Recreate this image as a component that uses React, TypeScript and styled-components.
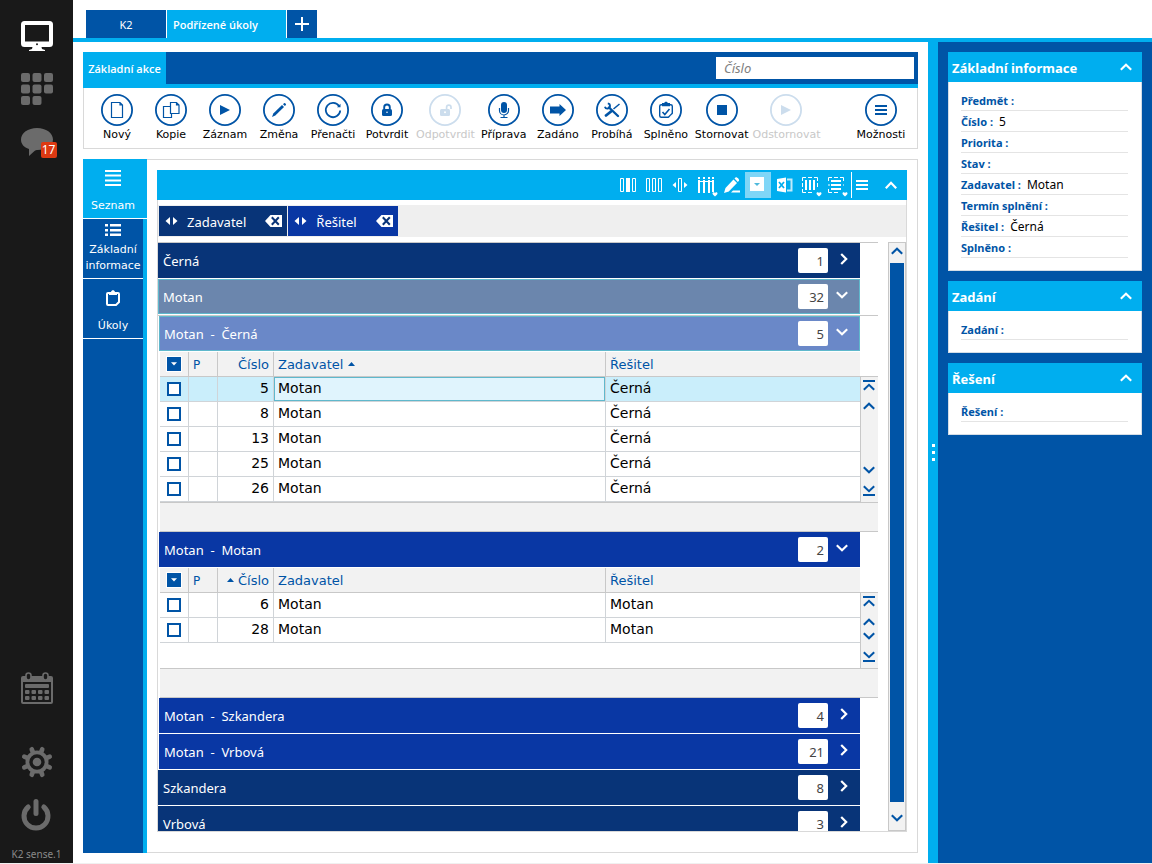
import React from "react";
import styled, { createGlobalStyle, css } from "styled-components";

const cyan = "#00aeef";
const blue = "#0054a6";
const navy = "#083478";
const royal = "#0937a4";
const line = "#d9d9d9";
const gridLine = "#c8c8c8";
const uiFont = '"Noto Sans", "Open Sans", sans-serif';
const wideFont = '"DejaVu Sans", Verdana, sans-serif';

const GlobalStyle = createGlobalStyle`
  *, *::before, *::after { box-sizing: border-box; }
  body { margin: 0; background: #fff; font-family: ${uiFont}; font-size: 13px; color: #000; }
  button { font: inherit; color: inherit; background: none; border: 0; padding: 0; margin: 0; cursor: pointer; }
  svg { display: block; flex: none; }
`;

/* ---------- shell ---------- */

const Page = styled.div`
  display: flex;
  height: 100vh;
  overflow: hidden;
  border-bottom: 1px solid #f0f0f0;
`;

const Dock = styled.nav`
  flex: none;
  width: 73px;
  display: flex;
  flex-direction: column;
  align-items: center;
  gap: 21px;
  padding: 20px 0 2px;
  background: #191919;
  color: #6b6b6b;
`;

const DockButton = styled.button<{ $active?: boolean }>`
  position: relative;
  width: 32px;
  height: 32px;
  color: ${(p) => (p.$active ? "#fff" : "inherit")};
`;

const DockSpacer = styled.div`
  flex: 1;
`;

const DockBreak = styled.div`
  height: 0;
`;

const DockFoot = styled.div`
  display: flex;
  flex-direction: column;
  align-items: center;
  gap: 16px;
`;

const Badge = styled.span`
  position: absolute;
  left: 20px;
  top: 16px;
  width: 16px;
  height: 16px;
  border-radius: 2px;
  background: #dc3912;
  color: #fff;
  font-size: 12px;
  line-height: 16px;
  text-align: center;
`;

const Version = styled.div`
  font-size: 10px;
  line-height: 14px;
  color: #8a8a8a;
`;

const Workspace = styled.div`
  flex: 1;
  min-width: 0;
  display: flex;
  flex-direction: column;
`;

const TabBar = styled.div`
  flex: none;
  display: flex;
  gap: 1px;
  padding: 10px 13px 0;
  border-bottom: 4px solid ${cyan};
`;

const PageTab = styled.button<{ $active?: boolean }>`
  display: flex;
  align-items: center;
  justify-content: center;
  height: 28px;
  width: 80px;
  background: ${blue};
  color: #fff;
  font-size: 11px;
  ${(p) =>
    p.$active &&
    css`
      width: 119px;
      justify-content: flex-start;
      padding-left: 6px;
      background: ${cyan};
      font-family: "Open Sans", "Noto Sans", sans-serif;
      font-weight: 600;
    `}
`;

const AddTab = styled(PageTab)`
  width: 30px;
`;

const Split = styled.div`
  flex: 1;
  min-height: 0;
  display: flex;
`;

const Main = styled.main`
  flex: 1;
  min-width: 0;
  display: flex;
  flex-direction: column;
  gap: 10px;
  padding: 10px;
`;

const Splitter = styled.div`
  flex: none;
  width: 10px;
  background: ${cyan};
  display: flex;
  flex-direction: column;
  align-items: center;
  justify-content: center;
  gap: 4px;
`;

const Dot = styled.i`
  width: 3px;
  height: 3px;
  background: #fff;
`;

/* ---------- ribbon ---------- */

const Ribbon = styled.section`
  flex: none;
`;

const RibbonHead = styled.div`
  display: flex;
  justify-content: space-between;
  height: 36px;
  background: ${blue};
  border-bottom: 4px solid ${cyan};
`;

const RibbonTab = styled.button`
  width: 83px;
  background: ${cyan};
  color: #fff;
  font-family: "Open Sans", "Noto Sans", sans-serif;
  font-size: 11px;
  font-weight: 600;
`;

const Search = styled.input`
  width: 198px;
  height: 22px;
  margin: 5px 4px 0 0;
  padding: 0 8px;
  border: 0;
  border-radius: 0;
  background: #fff;
  font: italic 13px ${uiFont};
  &::placeholder { color: #808080; opacity: 1; }
`;

const RibbonBody = styled.div`
  display: flex;
  height: 61px;
  padding: 6px 9px 0 6px;
  border: 1px solid ${line};
  border-top: 0;
`;

const Action = styled.button`
  display: flex;
  flex-direction: column;
  align-items: center;
  gap: 2px;
  height: 48px;
  min-width: 54px;
  padding: 0 2px;
  font-family: ${wideFont};
  font-size: 11px;
  line-height: 13px;
  svg { color: ${blue}; }
  &:disabled { color: #c8c8c8; }
  &:disabled svg { color: #ccdded; }
`;

const Grow = styled.div`
  flex: 1;
`;

/* ---------- body ---------- */

const Body = styled.div`
  flex: 1;
  min-height: 0;
  display: flex;
`;

const SideTabs = styled.div`
  flex: none;
  width: 64px;
  background: linear-gradient(to right, ${blue} 60px, ${cyan} 60px);
`;

const SideTab = styled.button<{ $active?: boolean }>`
  display: flex;
  flex-direction: column;
  align-items: center;
  justify-content: space-between;
  width: ${(p) => (p.$active ? "64px" : "60px")};
  height: 60px;
  padding: ${(p) => (p.$active ? "5px 4px 4px 0" : "5px 0 4px")};
  background: ${(p) => (p.$active ? cyan : blue)};
  border-bottom: 1px solid #fff;
  color: #fff;
  font-family: ${wideFont};
  font-size: 11px;
  line-height: 16px;
`;

const SideIcon = styled.span<{ $tight?: boolean }>`
  flex: 1;
  display: flex;
  align-items: ${(p) => (p.$tight ? "flex-start" : "center")};
  padding-bottom: ${(p) => (p.$tight ? "0" : "6px")};
`;

const Frame = styled.section`
  flex: 1;
  min-width: 0;
  display: flex;
  flex-direction: column;
  padding: 10px 10px 20px;
  border: 1px solid ${line};
  border-left: 0;
`;

const GridPanel = styled.div`
  flex: 1;
  min-height: 0;
  display: flex;
  flex-direction: column;
`;

const GridToolbar = styled.div`
  flex: none;
  display: flex;
  align-items: center;
  justify-content: flex-end;
  height: 30px;
  padding-right: 3px;
  background: ${cyan};
  color: #fff;
`;

const Tool = styled.button<{ $pressed?: boolean }>`
  width: 26px;
  height: 26px;
  background: ${(p) => (p.$pressed ? "#7fd6f7" : "none")};
`;

const ToolDivider = styled.div`
  width: 1px;
  height: 26px;
  margin-left: 2px;
  background: #fff;
`;

const GridBody = styled.div`
  flex: 1;
  min-height: 0;
  display: flex;
  flex-direction: column;
  gap: 5px;
  padding-top: 5px;
  border: 1px solid ${line};
  border-top: 0;
`;

const GroupBar = styled.div`
  flex: none;
  display: flex;
  gap: 1px;
  padding: 1px;
  height: 32px;
  background: #efefef;
`;

const Chip = styled.div<{ $color: string }>`
  display: flex;
  align-items: center;
  height: 30px;
  padding: 0 5px 0 6px;
  background: ${(p) => p.$color};
  color: #fff;
`;

const ChipLabel = styled.span`
  padding: 2px 19px 0 9px;
`;

const ListArea = styled.div`
  flex: 1;
  min-height: 0;
  display: flex;
  gap: 10px;
`;

const List = styled.div`
  flex: 1;
  min-width: 0;
  overflow: hidden;
  border-top: 1px solid ${gridLine};
`;

const SubList = styled.div`
  border-top: 1px solid ${gridLine};
`;

type Tone = "navy" | "steel" | "royal" | "sky";

const tones: Record<Tone, string> = {
  navy,
  steel: "#6b86ad",
  royal,
  sky: "#6a88c8",
};

const GroupRow = styled.div<{ $tone: Tone; $nested?: boolean }>`
  display: flex;
  align-items: center;
  height: 35px;
  margin: 0 18px 1px ${(p) => (p.$nested ? "1px" : "0")};
  padding-left: 5px;
  background: ${(p) => tones[p.$tone]};
  color: #fff;
  ${(p) =>
    (p.$tone === "steel" || p.$tone === "sky") &&
    css`
      padding-left: 4px;
      border: 1px solid #5fb8cc;
    `}
`;

const GroupName = styled.span`
  flex: 1;
  padding-top: 1px;
  white-space: pre;
`;

const Count = styled.span`
  width: 30px;
  height: 25px;
  padding-right: 4px;
  border-radius: 2px;
  background: #fff;
  color: #444;
  line-height: 27px;
  text-align: right;
`;

const Toggle = styled.button<{ $edge?: boolean }>`
  display: flex;
  width: ${(p) => (p.$edge ? "31px" : "32px")};
  padding: 0 0 4px;
  &[aria-expanded="true"] { padding-left: 8px; }
  &[aria-expanded="false"] { padding-left: 12px; }
`;

/* ---------- nested tables ---------- */

const Nested = styled.div`
  margin-left: 2px;
`;

const NestedTop = styled.div`
  display: flex;
  border-bottom: 1px solid ${gridLine};
`;

const TableBox = styled.div`
  flex: 1;
  min-width: 0;
`;

const Table = styled.table`
  width: 100%;
  table-layout: fixed;
  border-collapse: separate;
  border-spacing: 0;
  font-family: ${wideFont};
`;

const Col = styled.col<{ $w?: number }>`
  width: ${(p) => (p.$w ? `${p.$w}px` : "auto")};
`;

const Th = styled.th<{ $right?: boolean }>`
  height: 25px;
  padding: 2px 4px 0;
  background: #f2f2f2;
  border-right: 1px solid ${gridLine};
  border-bottom: 1px solid ${gridLine};
  color: ${blue};
  font-size: 13px;
  line-height: 20px;
  font-weight: 400;
  text-align: ${(p) => (p.$right ? "right" : "left")};
  &:last-child { border-right: 0; }
  svg { display: inline-block; vertical-align: 3px; }
`;

const SmallHead = styled.span`
  font-size: 12px;
`;

const Td = styled.td<{ $right?: boolean; $focus?: boolean }>`
  height: 25px;
  padding: 0 4px 2px;
  border-right: 1px solid #d0d4d8;
  border-bottom: 1px solid #d0d4d8;
  font-size: 14px;
  line-height: 20px;
  text-align: ${(p) => (p.$right ? "right" : "left")};
  &:last-child { border-right: 0; }
  ${(p) =>
    p.$focus &&
    css`
      background: #e0f4fd;
      box-shadow: inset 0 0 0 1px #5fb8cc;
    `}
`;

const Tr = styled.tr<{ $selected?: boolean }>`
  background: ${(p) => (p.$selected ? "#caeefb" : "#fff")};
`;

const CheckTh = styled(Th)`
  padding: 0 7px;
`;

const CheckTd = styled(Td)`
  padding: 0 7px;
`;

const Check = styled.input`
  appearance: none;
  display: block;
  width: 14px;
  height: 14px;
  margin: 0;
  border: 2px solid ${blue};
  border-radius: 0;
  background: #fff;
`;

const SelectMenu = styled.button`
  display: flex;
  align-items: center;
  justify-content: center;
  width: 14px;
  height: 14px;
  background: ${blue};
  outline: 1px solid #fff;
  color: #fff;
`;

const EmptySpace = styled.div`
  height: 25px;
`;

const Pager = styled.div`
  flex: none;
  width: 18px;
  display: flex;
  flex-direction: column;
  justify-content: space-between;
  align-items: center;
  margin-top: 24px;
  padding: 3px 1px 6px 0;
  background: #f2f2f2;
  border-top: 1px solid ${gridLine};
  border-left: 1px solid ${gridLine};
  color: ${blue};
`;

const PagerPair = styled.div`
  display: flex;
  flex-direction: column;
  gap: 11px;
`;

const Footer = styled.div`
  height: 29px;
  background: #f2f2f2;
  border-bottom: 1px solid ${gridLine};
`;

const ScrollTrack = styled.div`
  flex: none;
  width: 18px;
  display: flex;
  flex-direction: column;
  align-items: center;
  background: #f2f2f2;
  border: 1px solid ${gridLine};
  color: ${blue};
`;

const ScrollArrow = styled.button<{ $tall?: boolean }>`
  display: flex;
  justify-content: center;
  padding-top: ${(p) => (p.$tall ? "12px" : "4px")};
  width: 16px;
  height: ${(p) => (p.$tall ? "28px" : "20px")};
`;

const Thumb = styled.div`
  flex: 1;
  width: 14px;
  background: ${blue};
`;

/* ---------- preview panel ---------- */

const Preview = styled.aside`
  flex: none;
  width: 214px;
  display: flex;
  flex-direction: column;
  gap: 10px;
  padding: 10px;
  background: ${blue};
`;

const CardHead = styled.button`
  display: flex;
  align-items: center;
  justify-content: space-between;
  width: 100%;
  height: 30px;
  padding: 2px 10px 0 4px;
  background: ${cyan};
  color: #fff;
  font-weight: 700;
  svg { margin-bottom: 2px; }
`;

const CardBody = styled.dl`
  margin: 0;
  padding: 8px 13px 12px 12px;
  background: #fff;
  border: 1px solid #d4dde6;
  border-top: 0;
`;

const Field = styled.div`
  display: flex;
  align-items: center;
  gap: 6px;
  height: 21px;
  border-bottom: 1px solid #e4e4e4;
  dt {
    color: ${blue};
    font-size: 11px;
    font-weight: 700;
    white-space: pre;
  }
  dd { margin: 0; font-size: 12px; }
`;

/* ---------- icons ---------- */

const Chevron = ({ dir, w = 12 }: { dir: "up" | "down" | "right"; w?: number }) => {
  if (dir === "right")
    return (
      <svg width="8" height="12" viewBox="0 0 8 12" fill="none" stroke="currentColor" strokeWidth="2.2">
        <path d="M1.2 1l5 5-5 5" />
      </svg>
    );
  return (
    <svg width={w} height="8" viewBox="0 0 12 8" fill="none" stroke="currentColor" strokeWidth="2.1">
      <path d={dir === "up" ? "M.8 6.8L6 1.8l5.200 5" : "M.8 1.200L6 6.200l5.200-5"} />
    </svg>
  );
};

const EdgeChevron = ({ dir }: { dir: "up" | "down" }) => (
  <svg width="12" height="11" viewBox="0 0 12 11" fill="none" stroke="currentColor" strokeWidth="2">
    {dir === "up" ? <path d="M0 1h12M.8 9.800L6 4.800l5.200 5" /> : <path d="M0 10h12M.8 1.200L6 6.200l5.200-5" />}
  </svg>
);

const Triangle = ({ dir, w = 7 }: { dir: "up" | "down"; w?: number }) => (
  <svg width={w} height="4" viewBox="0 0 7 4" fill="currentColor">
    <path d={dir === "up" ? "M0 4L3.500 0 7 4z" : "M0 0h7L3.500 3.800z"} />
  </svg>
);

const ChipArrows = () => (
  <svg width="13" height="8" viewBox="0 0 13 8" fill="currentColor">
    <path d="M5 0v8L.5 4zM8 0v8l4.500-4z" />
  </svg>
);

const ChipRemove = () => (
  <svg width="17" height="12" viewBox="0 0 17 12">
    <path d="M5.500 0H17v12H5.500L0 6z" fill="#fff" />
    <path d="M6.800 2.200l7 7.600M13.800 2.200l-7 7.600" stroke={navy} strokeWidth="2" />
  </svg>
);

const actionGlyphs: Record<string, React.ReactNode> = {
  novy: <path d="M10.500 8.500h8.500l2.500 2.500v12.500h-11zM19 8.500v2.500h2.500" fill="none" stroke="currentColor" strokeWidth="1.200" />,
  kopie: (
    <g fill="none" stroke="currentColor" strokeWidth="1.200">
      <path d="M15.500 12.500h-7v11h8v-3.500" />
      <path d="M15.500 8.500h6l2.500 2.500v8.500h-8.500zM21.500 8.500v2.500h2.500" />
    </g>
  ),
  play: <path d="M11 11l10 5-10 5z" fill="currentColor" />,
  edit: (
    <g fill="currentColor">
      <path d="M9 23l1.300-3.600 8.700-8.300 2 2-8.700 8.300z" />
      <path d="M20 10.200l1-1c.8-.7 2.600 1 1.900 1.800l-1 1z" />
    </g>
  ),
  reload: (
    <g>
      <path d="M22 12A7.200 7.200 0 1 0 23.200 16.500" fill="none" stroke="currentColor" strokeWidth="1.800" />
      <path d="M20 13.200h3.500V9.700z" fill="currentColor" />
    </g>
  ),
  lock: (
    <g>
      <rect x="11" y="15" width="10" height="7" rx="1.500" fill="currentColor" />
      <path d="M13.200 15.500v-2.200a2.800 2.800 0 0 1 5.600 0v2.200" fill="none" stroke="currentColor" strokeWidth="1.900" />
      <circle cx="16" cy="18.200" r="0.800" fill="#fff" />
    </g>
  ),
  unlock: (
    <g>
      <rect x="11" y="15" width="10" height="7" rx="1.500" fill="currentColor" />
      <path d="M17.600 15.500v-2.200a2.200 2.200 0 0 1 4.400 0v1.700" fill="none" stroke="currentColor" strokeWidth="1.700" />
      <circle cx="16" cy="18.200" r="1" fill="#fff" />
    </g>
  ),
  mic: (
    <g>
      <rect x="13" y="8" width="6" height="11" rx="3" fill="currentColor" />
      <path d="M11.500 14v2.500a4.500 4.500 0 0 0 9 0V14M16 21v2.500M12.500 23.500h7" fill="none" stroke="currentColor" strokeWidth="1.200" />
    </g>
  ),
  arrow: <path d="M8 12.500h9.500V10l6.500 6-6.500 6v-2.500H8z" fill="currentColor" />,
  tools: (
    <g fill="none" stroke="currentColor">
      <path d="M13 13.500l9 8.500" strokeWidth="2.400" strokeLinecap="round" />
      <path d="M11.800 9.400a2.600 2.600 0 1 1-2.900 3.300" strokeWidth="1.900" />
      <path d="M23.500 10l-6 5" strokeWidth="1.500" />
      <path d="M15 17.500l-5 4" strokeWidth="2.800" strokeLinecap="round" />
    </g>
  ),
  done: (
    <g>
      <rect x="9.700" y="10.700" width="12.600" height="12.600" rx="1.500" fill="none" stroke="currentColor" strokeWidth="1.400" />
      <path d="M12 9h2.200c.5-1.600 3.100-1.600 3.600 0H20v3.200h-8z" fill="currentColor" />
      <path d="M12.500 18l2.300 2.500 4.700-5.500" fill="none" stroke="currentColor" strokeWidth="1.600" />
      <path d="M18.500 24l4.500-4.500V24z" fill="#fff" />
      <path d="M18.500 23l3.500-3.500" stroke="currentColor" strokeWidth="1.100" />
    </g>
  ),
  stop: <rect x="11" y="11" width="10" height="10" fill="currentColor" />,
  menu: <path d="M10 11h12v2H10zM10 15h12v2H10zM10 19h12v2H10z" fill="currentColor" />,
};

const ActionIcon = ({ name }: { name: string }) => (
  <svg width="32" height="32" viewBox="0 0 32 32">
    <circle cx="16" cy="16" r="15.100" fill="none" stroke="currentColor" strokeWidth="1.800" />
    {actionGlyphs[name]}
  </svg>
);

const toolGlyphs: Record<string, React.ReactNode> = {
  columnFill: (
    <g>
      <path d="M5.500 6.500h3v13h-3zM17.500 6.500h3v13h-3z" fill="none" stroke="currentColor" />
      <rect x="11" y="6" width="4" height="14" fill="currentColor" />
    </g>
  ),
  columns: (
    <path d="M5.500 6.500h3v13h-3zM11.500 6.500h3v13h-3zM17.500 6.500h3v13h-3z" fill="none" stroke="currentColor" />
  ),
  fit: (
    <g>
      <path d="M11.500 6.500h3v13h-3z" fill="none" stroke="currentColor" />
      <path d="M9 10v6l-3.500-3zM17 10v6l3.500-3z" fill="currentColor" />
    </g>
  ),
  columnSetup: (
    <g fill="currentColor">
      <path d="M5 5h2v2H5zM10 5h2v2h-2zM15 5h2v2h-2zM19 5h2v2h-2z" />
      <path d="M5 8h2v13H5zM10 8h2v13h-2zM15 8h2v13h-2zM19 8h2v12h-2z" />
      <path d="M5 9h16v1H5z" />
      <path d="M19.500 21.500c0-1.500 2-1.500 2.500-.5.500-1 2.500-1 2.500.5 0 1-1.500 2-2.500 3-1-1-2.500-2-2.500-3z" />
    </g>
  ),
  pencil: (
    <g fill="currentColor">
      <path d="M5 21l1.500-5 8-8.500 3.500 3.500-8.200 8.500z" />
      <path d="M15.500 6.500l1-1c1.200-1 4.300 2 3.500 3.300l-1.200 1.200zM14 18.500h7v2h-9z" />
    </g>
  ),
  dropdown: (
    <g>
      <rect x="5" y="5" width="14" height="14" fill="#fff" />
      <path d="M9 11h6l-3 3z" fill="#4fb9dc" />
    </g>
  ),
  excel: (
    <g>
      <path d="M6 7l9-1.500v15L6 19z" fill="#fff" />
      <path d="M16 7.500h4.500v11H16" fill="none" stroke="#bfeafa" strokeWidth="2" />
      <path d="M8 10l5 6M13 10l-5 6" stroke={cyan} strokeWidth="1.700" />
    </g>
  ),
  frameColumns: (
    <g>
      <path d="M9 5.500H5.500V9M17 5.500h3.500V9M5.500 17v3.500H9M11 5.500h4M5.500 11v4M20.500 11v4M11 20.500h4" fill="none" stroke="currentColor" />
      <path d="M8 8h2v10H8zM12 8h2v10h-2zM16 8h2v10h-2z" fill="currentColor" />
      <path d="M19.500 21.500c0-1.500 2-1.500 2.500-.5.500-1 2.500-1 2.500.5 0 1-1.500 2-2.500 3-1-1-2.500-2-2.500-3z" fill="currentColor" />
    </g>
  ),
  frameRows: (
    <g>
      <path d="M9 5.500H5.500V9M17 5.500h3.500V9M5.500 17v3.500H9M11 5.500h4M11 20.500h4" fill="none" stroke="currentColor" />
      <path d="M8 8h10v2H8zM8 12h10v2H8zM8 16h10v2H8zM5 12.500h2v1H5zM20 12.500h1v1h-1z" fill="currentColor" />
      <path d="M19.500 21.500c0-1.500 2-1.500 2.500-.5.500-1 2.500-1 2.500.5 0 1-1.500 2-2.500 3-1-1-2.500-2-2.500-3z" fill="currentColor" />
    </g>
  ),
  menu: <path d="M4 8h12v2H4zM4 12h12v2H4zM4 16h12v2H4z" fill="currentColor" />,
  collapse: <path d="M7.800 16.200l5.200-5.400 5.200 5.400" fill="none" stroke="currentColor" strokeWidth="2.200" />,
};

const ToolIcon = ({ name }: { name: string }) => (
  <svg width="26" height="26" viewBox="0 0 26 26">
    {toolGlyphs[name]}
  </svg>
);

const dockGlyphs: Record<string, React.ReactNode> = {
  monitor: (
    <g>
      <path d="M3.500 1h25A3.500 3.500 0 0 1 32 4.500v19a3.500 3.500 0 0 1-3.500 3.500h-25A3.500 3.500 0 0 1 0 23.500v-19A3.500 3.500 0 0 1 3.500 1zM4 5v16.500h24V5z" fill="currentColor" fillRule="evenodd" />
      <path d="M11.500 27h9l.5 2 3 1v1H8v-1l3-1z" fill="currentColor" />
      <circle cx="16" cy="24.300" r="1" fill="#191919" />
    </g>
  ),
  grid: (
    <g fill="currentColor">
      {[0, 11.500, 23].map((y) =>
        [0, 11.500, 23].map((x) => (x === 23 && y === 23 ? null : <rect key={`${x}-${y}`} x={x} y={y} width="9" height="9" rx="2" />))
      )}
    </g>
  ),
  chat: <path d="M16 2c9 0 16 5 16 11.500S25 24 16.500 24c-1 0-2 0-3 1L8 30v-7C3 21.500 0 18 0 13.500 0 7 7 2 16 2z" fill="currentColor" />,
  calendar: (
    <g>
      <path d="M2 4h28a2 2 0 0 1 2 2v24a2 2 0 0 1-2 2H2a2 2 0 0 1-2-2V6a2 2 0 0 1 2-2zM2 10v20h28V10z" fill="currentColor" fillRule="evenodd" />
      <rect x="5" y="1" width="5" height="7" rx="2.500" fill="#191919" stroke="currentColor" strokeWidth="1.600" />
      <rect x="22" y="1" width="5" height="7" rx="2.500" fill="#191919" stroke="currentColor" strokeWidth="1.600" />
      <rect x="4" y="12" width="24" height="4" rx="1" fill="currentColor" />
      {[18, 24].map((y) => [4, 10.500, 17, 23.500].map((x) => <rect key={`${x}-${y}`} x={x} y={y} width="4.500" height="4" rx="1" fill="currentColor" />))}
    </g>
  ),
  gear: (
    <g>
      <g stroke="currentColor" strokeWidth="4.600" strokeLinecap="round">
        {[22.500, 67.500, 112.500, 157.500, 202.500, 247.500, 292.500, 337.500].map((a) => (
          <path key={a} d="M16 6V2.200" transform={`rotate(${a} 16 16)`} />
        ))}
      </g>
      <circle cx="16" cy="16" r="11.500" fill="currentColor" />
      <circle cx="16" cy="16" r="6" fill="none" stroke="#191919" strokeWidth="3.400" />
    </g>
  ),
  power: (
    <g fill="none" stroke="currentColor" strokeWidth="5" strokeLinecap="round">
      <path d="M8.200 8a12 12 0 1 0 15.600 0" />
      <path d="M16 2.600v12" />
    </g>
  ),
};

const DockIcon = ({ name }: { name: string }) => (
  <svg width="32" height="32" viewBox="0 0 32 32">
    {dockGlyphs[name]}
  </svg>
);

const ListIcon = () => (
  <svg width="16" height="16" viewBox="0 0 16 16" fill="#fff">
    <path d="M0 0h16v2H0zM0 4.500h16v2H0zM0 9.500h16v2H0zM0 14h16v2H0z" />
  </svg>
);

const BulletsIcon = () => (
  <svg width="16" height="12" viewBox="0 0 16 12" fill="#fff">
    <path d="M0 0h3v2.500H0zM0 5h3v2.500H0zM0 9.500h3V12H0zM5 0h11v2.500H5zM5 5h11v2.500H5zM5 9.500h11V12H5z" />
  </svg>
);

const TasksIcon = () => (
  <svg width="14" height="16" viewBox="0 0 14 16">
    <path d="M2 3h10a1 1 0 0 1 1 1v8l-3 3H2a1 1 0 0 1-1-1V4a1 1 0 0 1 1-1z" fill="none" stroke="#fff" strokeWidth="2" />
    <path d="M3 2h2c.5-2.500 3.500-2.500 4 0h2v3H3z" fill="#fff" />
  </svg>
);

/* ---------- data ---------- */

const actions: [string, string, boolean?][] = [
  ["novy", "Nový"],
  ["kopie", "Kopie"],
  ["play", "Záznam"],
  ["edit", "Změna"],
  ["reload", "Přenačti"],
  ["lock", "Potvrdit"],
  ["unlock", "Odpotvrdit", true],
  ["mic", "Příprava"],
  ["arrow", "Zadáno"],
  ["tools", "Probíhá"],
  ["done", "Splněno"],
  ["stop", "Stornovat"],
  ["play", "Odstornovat", true],
];

const tools: [string, string][] = [
  ["columnFill", "Zvýraznit sloupec"],
  ["columns", "Sloupce"],
  ["fit", "Přizpůsobit šířku"],
  ["columnSetup", "Nastavení sloupců"],
  ["pencil", "Upravit"],
  ["dropdown", "Seskupení"],
  ["excel", "Excel"],
  ["frameColumns", "Výběr sloupců"],
  ["frameRows", "Výběr řádků"],
];

type TaskRow = [number, string, string];

const tasksCerna: TaskRow[] = [5, 8, 13, 25, 26].map((n) => [n, "Motan", "Černá"]);
const tasksMotan: TaskRow[] = [6, 28].map((n) => [n, "Motan", "Motan"]);

/* ---------- composite parts ---------- */

const Group = ({ name, count, tone, nested, open }: { name: string; count: number; tone: Tone; nested?: boolean; open?: boolean }) => (
  <GroupRow $tone={tone} $nested={nested}>
    <GroupName>{name}</GroupName>
    <Count>{count}</Count>
    <Toggle $edge={tone === "steel" || tone === "sky"} aria-label={name} aria-expanded={!!open}>
      <Chevron dir={open ? "down" : "right"} />
    </Toggle>
  </GroupRow>
);

const TaskTable = ({ rows, sortBy, selected, spare }: { rows: TaskRow[]; sortBy: "cislo" | "zadavatel"; selected?: number; spare?: boolean }) => (
  <Nested>
    <NestedTop>
      <TableBox>
        <Table>
          <colgroup>
            <Col $w={29} />
            <Col $w={29} />
            <Col $w={56} />
            <Col $w={332} />
            <Col />
          </colgroup>
          <thead>
            <tr>
              <CheckTh>
                <SelectMenu aria-label="Výběr záznamů">
                  <Triangle dir="down" w={6} />
                </SelectMenu>
              </CheckTh>
              <Th>
                <SmallHead>P</SmallHead>
              </Th>
              <Th $right>
                {sortBy === "cislo" && <Triangle dir="up" />} {sortBy === "cislo" && " "}Číslo
              </Th>
              <Th>Zadavatel {sortBy === "zadavatel" && <Triangle dir="up" />}</Th>
              <Th>Řešitel</Th>
            </tr>
          </thead>
          <tbody>
            {rows.map(([n, zadavatel, resitel]) => (
              <Tr key={n} $selected={n === selected}>
                <CheckTd>
                  <Check type="checkbox" aria-label={`Úkol ${n}`} />
                </CheckTd>
                <Td />
                <Td $right>{n}</Td>
                <Td $focus={n === selected}>{zadavatel}</Td>
                <Td>{resitel}</Td>
              </Tr>
            ))}
          </tbody>
        </Table>
        {spare && <EmptySpace />}
      </TableBox>
      <Pager>
        <PagerPair>
          <EdgeChevron dir="up" />
          <Chevron dir="up" />
        </PagerPair>
        <PagerPair>
          <Chevron dir="down" />
          <EdgeChevron dir="down" />
        </PagerPair>
      </Pager>
    </NestedTop>
    <Footer />
  </Nested>
);

const Card = ({ title, fields }: { title: string; fields: [string, string?][] }) => (
  <section>
    <CardHead aria-expanded>
      {title}
      <Chevron dir="up" />
    </CardHead>
    <CardBody>
      {fields.map(([label, value]) => (
        <Field key={label}>
          <dt>{label} :</dt>
          <dd>{value}</dd>
        </Field>
      ))}
    </CardBody>
  </section>
);

export default function App() {
  return (
    <>
      <GlobalStyle />
      <Page>
        <Dock>
          <DockButton $active aria-label="Plocha">
            <DockIcon name="monitor" />
          </DockButton>
          <DockButton aria-label="Moduly">
            <DockIcon name="grid" />
          </DockButton>
          <DockButton aria-label="Zprávy">
            <DockIcon name="chat" />
            <Badge>17</Badge>
          </DockButton>
          <DockSpacer />
          <DockButton aria-label="Kalendář">
            <DockIcon name="calendar" />
          </DockButton>
          <DockBreak />
          <DockButton aria-label="Nastavení">
            <DockIcon name="gear" />
          </DockButton>
          <DockFoot>
            <DockButton aria-label="Odhlásit">
              <DockIcon name="power" />
            </DockButton>
            <Version>K2 sense.1</Version>
          </DockFoot>
        </Dock>

        <Workspace>
          <TabBar>
            <PageTab>K2</PageTab>
            <PageTab $active>Podřízené úkoly</PageTab>
            <AddTab aria-label="Nová záložka">
              <svg width="14" height="14" viewBox="0 0 14 14" fill="none" stroke="#fff" strokeWidth="2">
                <path d="M0 7h14M7 0v14" />
              </svg>
            </AddTab>
          </TabBar>

          <Split>
            <Main>
              <Ribbon>
                <RibbonHead>
                  <RibbonTab>Základní akce</RibbonTab>
                  <Search type="text" placeholder="Číslo" aria-label="Číslo" />
                </RibbonHead>
                <RibbonBody>
                  {actions.map(([icon, label, disabled]) => (
                    <Action key={label} disabled={disabled}>
                      <ActionIcon name={icon} />
                      {label}
                    </Action>
                  ))}
                  <Grow />
                  <Action>
                    <ActionIcon name="menu" />
                    Možnosti
                  </Action>
                </RibbonBody>
              </Ribbon>

              <Body>
                <SideTabs>
                  <SideTab $active>
                    <SideIcon>
                      <ListIcon />
                    </SideIcon>
                    Seznam
                  </SideTab>
                  <SideTab>
                    <SideIcon $tight>
                      <BulletsIcon />
                    </SideIcon>
                    Základní informace
                  </SideTab>
                  <SideTab>
                    <SideIcon>
                      <TasksIcon />
                    </SideIcon>
                    Úkoly
                  </SideTab>
                </SideTabs>

                <Frame>
                  <GridPanel>
                    <GridToolbar>
                      {tools.map(([icon, label]) => (
                        <Tool key={icon} $pressed={icon === "dropdown"} aria-label={label}>
                          <ToolIcon name={icon} />
                        </Tool>
                      ))}
                      <ToolDivider />
                      <Tool aria-label="Nabídka">
                        <ToolIcon name="menu" />
                      </Tool>
                      <Tool aria-label="Sbalit">
                        <ToolIcon name="collapse" />
                      </Tool>
                    </GridToolbar>

                    <GridBody>
                      <GroupBar>
                        {[
                          ["Zadavatel", navy],
                          ["Řešitel", royal],
                        ].map(([label, color]) => (
                          <Chip key={label} $color={color}>
                            <ChipArrows />
                            <ChipLabel>{label}</ChipLabel>
                            <button aria-label={`Odebrat ${label}`}>
                              <ChipRemove />
                            </button>
                          </Chip>
                        ))}
                      </GroupBar>

                      <ListArea>
                        <List>
                          <Group name="Černá" count={1} tone="navy" />
                          <Group name="Motan" count={32} tone="steel" open />
                          <SubList>
                            <Group name="Motan  -  Černá" count={5} tone="sky" nested open />
                            <TaskTable rows={tasksCerna} sortBy="zadavatel" selected={5} />
                            <Group name="Motan  -  Motan" count={2} tone="royal" nested open />
                            <TaskTable rows={tasksMotan} sortBy="cislo" spare />
                            <Group name="Motan  -  Szkandera" count={4} tone="royal" nested />
                            <Group name="Motan  -  Vrbová" count={21} tone="royal" nested />
                          </SubList>
                          <Group name="Szkandera" count={8} tone="navy" />
                          <Group name="Vrbová" count={3} tone="navy" />
                        </List>
                        <ScrollTrack>
                          <ScrollArrow aria-label="Nahoru">
                            <Chevron dir="up" />
                          </ScrollArrow>
                          <Thumb />
                          <ScrollArrow $tall aria-label="Dolů">
                            <Chevron dir="down" />
                          </ScrollArrow>
                        </ScrollTrack>
                      </ListArea>
                    </GridBody>
                  </GridPanel>
                </Frame>
              </Body>
            </Main>

            <Splitter>
              <Dot />
              <Dot />
              <Dot />
            </Splitter>

            <Preview>
              <Card
                title="Základní informace"
                fields={[
                  ["Předmět"],
                  ["Číslo", "5"],
                  ["Priorita"],
                  ["Stav"],
                  ["Zadavatel", "Motan"],
                  ["Termín splnění"],
                  ["Řešitel", "Černá"],
                  ["Splněno"],
                ]}
              />
              <Card title="Zadání" fields={[["Zadání"]]} />
              <Card title="Řešení" fields={[["Řešení"]]} />
            </Preview>
          </Split>
        </Workspace>
      </Page>
    </>
  );
}
